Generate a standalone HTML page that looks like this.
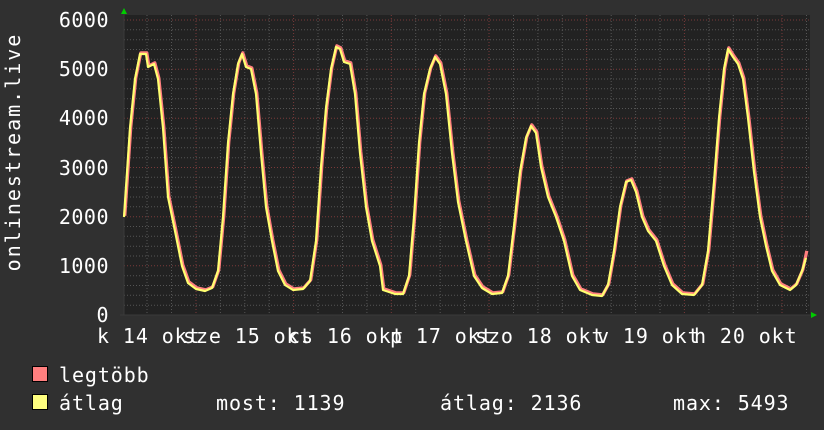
<!DOCTYPE html>
<html><head><meta charset="utf-8"><style>
html,body{margin:0;padding:0;background:#303030;}
svg{display:block;}
text{font-family:"DejaVu Sans Mono","Liberation Mono",monospace;fill:#fff;font-size:20px;}
.w{letter-spacing:0.9px;}
</style></head><body>
<svg width="824" height="430" viewBox="0 0 824 430" xmlns="http://www.w3.org/2000/svg">
<rect width="824" height="430" fill="#303030"/>
<rect x="124" y="15" width="686" height="300" fill="#222"/>
<g stroke="#555" stroke-width="1" stroke-dasharray="1,2">
<line x1="124" x2="810" y1="305.2" y2="305.2"/><line x1="124" x2="810" y1="295.3" y2="295.3"/><line x1="124" x2="810" y1="285.5" y2="285.5"/><line x1="124" x2="810" y1="275.7" y2="275.7"/>
<line x1="124" x2="810" y1="256" y2="256"/><line x1="124" x2="810" y1="246.2" y2="246.2"/><line x1="124" x2="810" y1="236.3" y2="236.3"/><line x1="124" x2="810" y1="226.5" y2="226.5"/>
<line x1="124" x2="810" y1="206.8" y2="206.8"/><line x1="124" x2="810" y1="197" y2="197"/><line x1="124" x2="810" y1="187.2" y2="187.2"/><line x1="124" x2="810" y1="177.3" y2="177.3"/>
<line x1="124" x2="810" y1="157.7" y2="157.7"/><line x1="124" x2="810" y1="147.8" y2="147.8"/><line x1="124" x2="810" y1="138" y2="138"/><line x1="124" x2="810" y1="128.2" y2="128.2"/>
<line x1="124" x2="810" y1="108.5" y2="108.5"/><line x1="124" x2="810" y1="98.7" y2="98.7"/><line x1="124" x2="810" y1="88.8" y2="88.8"/><line x1="124" x2="810" y1="79" y2="79"/>
<line x1="124" x2="810" y1="59.3" y2="59.3"/><line x1="124" x2="810" y1="49.5" y2="49.5"/><line x1="124" x2="810" y1="39.7" y2="39.7"/><line x1="124" x2="810" y1="29.8" y2="29.8"/>
<line y1="15" y2="315" x1="147" x2="147"/><line y1="15" y2="315" x1="171.5" x2="171.5"/><line y1="15" y2="315" x1="220.4" x2="220.4"/><line y1="15" y2="315" x1="244.8" x2="244.8"/><line y1="15" y2="315" x1="269.2" x2="269.2"/>
<line y1="15" y2="315" x1="318" x2="318"/><line y1="15" y2="315" x1="342.5" x2="342.5"/><line y1="15" y2="315" x1="366.9" x2="366.9"/>
<line y1="15" y2="315" x1="415.7" x2="415.7"/><line y1="15" y2="315" x1="440.2" x2="440.2"/><line y1="15" y2="315" x1="464.6" x2="464.6"/>
<line y1="15" y2="315" x1="513.5" x2="513.5"/><line y1="15" y2="315" x1="537.9" x2="537.9"/><line y1="15" y2="315" x1="562.3" x2="562.3"/>
<line y1="15" y2="315" x1="611.2" x2="611.2"/><line y1="15" y2="315" x1="635.6" x2="635.6"/><line y1="15" y2="315" x1="660" x2="660"/>
<line y1="15" y2="315" x1="708.9" x2="708.9"/><line y1="15" y2="315" x1="733.3" x2="733.3"/><line y1="15" y2="315" x1="757.7" x2="757.7"/><line y1="15" y2="315" x1="806.5" x2="806.5"/>
</g>
<g stroke="#7a3a3a" stroke-width="1" stroke-dasharray="1,2">
<line x1="124" x2="810" y1="265.8" y2="265.8"/><line x1="124" x2="810" y1="216.7" y2="216.7"/><line x1="124" x2="810" y1="167.5" y2="167.5"/><line x1="124" x2="810" y1="118.3" y2="118.3"/><line x1="124" x2="810" y1="69.2" y2="69.2"/><line x1="124" x2="810" y1="20" y2="20"/>
<line y1="15" y2="315" x1="196" x2="196"/><line y1="15" y2="315" x1="293.6" x2="293.6"/><line y1="15" y2="315" x1="391.3" x2="391.3"/><line y1="15" y2="315" x1="489" x2="489"/><line y1="15" y2="315" x1="586.7" x2="586.7"/><line y1="15" y2="315" x1="684.4" x2="684.4"/><line y1="15" y2="315" x1="782" x2="782"/>
</g>
<line x1="124" y1="10" x2="124" y2="315" stroke="#3a3a3a"/>
<line x1="120" y1="315" x2="812" y2="315" stroke="#3a3a3a"/>
<polygon points="121,14 127,14 124,8" fill="#0c0"/>
<polygon points="811,312 811,318 817,315" fill="#0c0"/>
<g fill="none" stroke-linejoin="round">
<polyline stroke="#ff7f7f" stroke-width="3.2" transform="translate(0.8,-1.2)" points="124,217 130,128 135,79 140,54 146,54 148,67 154,64 158,79 163,128 168,197 175,231 182,266 188,283 196,289 205,291 212,288 218,271 223,217 228,143 233,94 238,64 242,54 246,67 251,69 256,94 261,153 266,207 272,241 278,271 285,285 293,290 303,289 310,281 316,241 321,167 326,108 331,69 336,47 340,49 344,62 350,64 355,94 360,153 366,207 372,241 380,266 383,290 395,294 403,294 409,276 414,217 419,143 424,94 430,69 435,57 440,64 446,94 452,153 458,202 466,241 474,276 482,288 492,294 502,293 508,276 514,226 520,172 526,138 531,126 536,133 541,167 548,197 556,217 564,241 572,276 580,290 592,295 602,296 608,285 614,251 620,207 626,182 631,180 636,192 642,217 648,231 656,241 664,266 672,285 682,294 694,295 702,285 708,251 714,182 719,118 724,69 728,49 733,57 738,64 743,79 748,118 754,172 760,217 766,246 772,271 780,285 790,290 796,285 802,271 806,252"/>
<polyline stroke="#ffff70" stroke-width="2.2" points="124,217 130,128 135,79 140,54 146,54 148,67 154,64 158,79 163,128 168,197 175,231 182,266 188,283 196,289 205,291 212,288 218,271 223,217 228,143 233,94 238,64 242,54 246,67 251,69 256,94 261,153 266,207 272,241 278,271 285,285 293,290 303,289 310,281 316,241 321,167 326,108 331,69 336,47 340,49 344,62 350,64 355,94 360,153 366,207 372,241 380,266 383,290 395,294 403,294 409,276 414,217 419,143 424,94 430,69 435,57 440,64 446,94 452,153 458,202 466,241 474,276 482,288 492,294 502,293 508,276 514,226 520,172 526,138 531,126 536,133 541,167 548,197 556,217 564,241 572,276 580,290 592,295 602,296 608,285 614,251 620,207 626,182 631,180 636,192 642,217 648,231 656,241 664,266 672,285 682,294 694,295 702,285 708,251 714,182 719,118 724,69 728,49 733,57 738,64 743,79 748,118 754,172 760,217 766,246 772,271 780,285 790,290 796,285 802,271 806,258"/>
</g>
<g text-anchor="end" style="letter-spacing:0.5px">
<text x="109" y="27">6000</text><text x="109" y="76">5000</text><text x="109" y="125">4000</text><text x="109" y="175">3000</text><text x="109" y="224">2000</text><text x="109" y="273">1000</text><text x="109" y="322">0</text>
</g>
<text transform="translate(20,152) rotate(-90)" text-anchor="middle" style="letter-spacing:2px">onlinestream.live</text>
<g class="w">
<text x="97" y="343">k 14 okt</text><text x="183" y="343">sze 15 okt</text><text x="288" y="343">cs 16 okt</text><text x="390" y="343">p 17 okt</text><text x="475" y="343">szo 18 okt</text><text x="597" y="343">v 19 okt</text><text x="694" y="343">h 20 okt</text>
</g>
<rect x="32.5" y="366.5" width="15" height="15" fill="#ff7f7f" stroke="#000"/>
<rect x="32.5" y="394.5" width="15" height="15" fill="#ffff7f" stroke="#000"/>
<g class="w">
<text x="59" y="382">legtöbb</text>
<text x="59" y="410">átlag</text>
<text x="216" y="410">most: 1139</text>
<text x="440" y="410">átlag: 2136</text>
<text x="673" y="410">max: 5493</text>
</g>
</svg>
</body></html>
